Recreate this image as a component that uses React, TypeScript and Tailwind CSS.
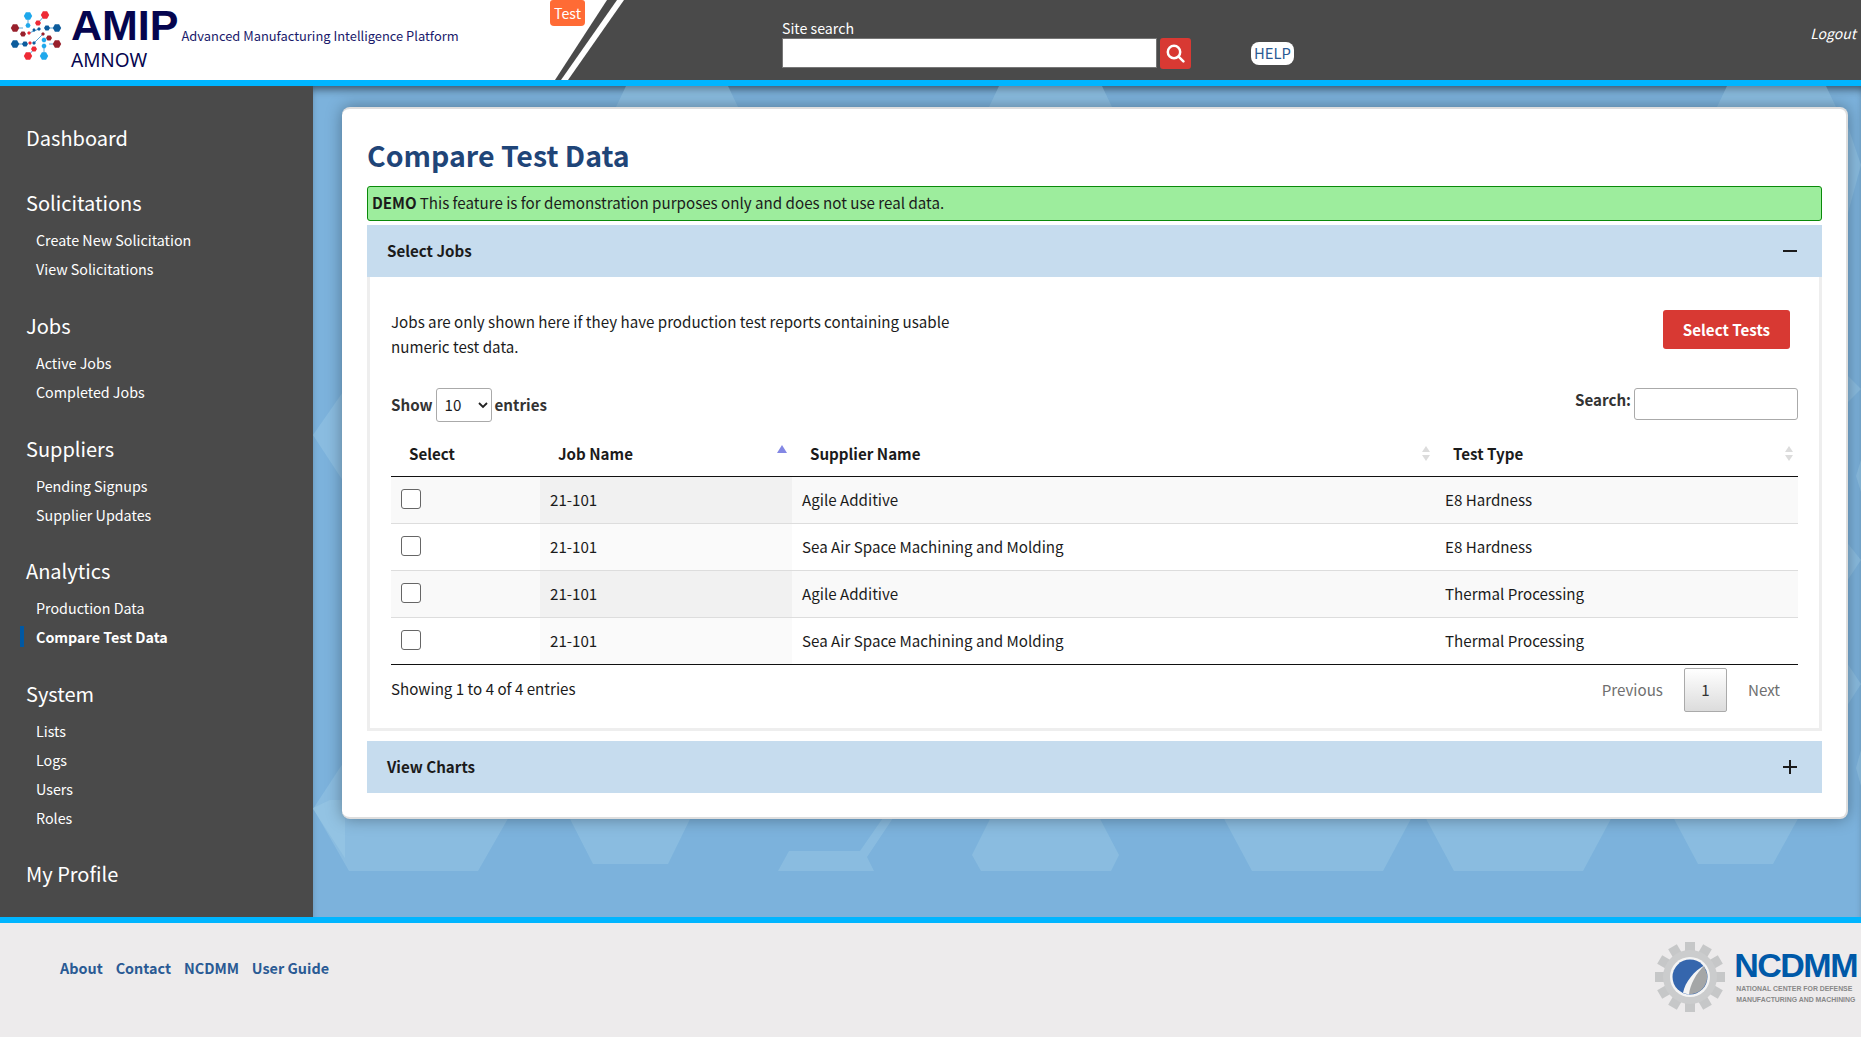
import React from "react";

const SANS = "font-['Noto_Sans_CJK_SC','Source_Sans_Pro',sans-serif]";

function Logo() {
  const hexes: [number, number, number, string][] = [
    [27, 15, 4.2, "#1ea8ec"], [44, 14, 4.2, "#ee2a35"], [14, 27, 4.2, "#98202c"], [56, 27, 4.2, "#0d5c9c"],
    [14, 43, 4.2, "#0d5c9c"], [56, 43, 4.2, "#98202c"], [27, 55, 4.2, "#ee2a35"], [43, 55, 4.2, "#1ea8ec"],
    [27, 24.5, 2.6, "#1ea8ec"], [37, 22, 3, "#ee2a35"], [46, 27, 3, "#0d5c9c"], [22, 33, 3, "#98202c"],
    [48, 37, 3, "#98202c"], [24, 43, 3, "#0d5c9c"], [33, 48, 3, "#ee2a35"], [43, 39, 2.5, "#1ea8ec"],
    [43, 45, 2.5, "#1ea8ec"], [28, 32, 1.8, "#ee2a35"], [38, 28, 1.8, "#0d5c9c"], [33, 42, 1.8, "#0d5c9c"],
    [29, 42, 1.8, "#ee2a35"], [42, 33, 1.8, "#98202c"], [33, 29, 1.6, "#0d5c9c"],
  ];
  const hex = (x: number, y: number, r: number) =>
    [0, 60, 120, 180, 240, 300]
      .map((a) => `${x + r * Math.cos((a * Math.PI) / 180)},${y + r * Math.sin((a * Math.PI) / 180)}`)
      .join(" ");
  return (
    <svg width="70" height="70" viewBox="0 0 70 70" className="shrink-0">
      <g stroke="#5aa7d8" strokeWidth="1" fill="none">
        <path d="M27 15V24M14 27H22M56 27H46M14 43H24M56 43H48M27 55L33 48M43 55V45M44 14L37 22M38 28L28 32M42 33L33 42" />
      </g>
      {hexes.map(([x, y, r, c], i) => (
        <polygon key={i} points={hex(x, y, r)} fill={c} />
      ))}
    </svg>
  );
}

function Hexes() {
  const polys = [
    "626,86 728,86 738,107 616,107",
    "999,86 1102,86 1112,107 989,107",
    "1727,86 1826,86 1836,107 1717,107",
    "313,435 345,389 345,484",
    "313,809 345,760 345,858",
    "313,808 349,871 478,871 510,815 510,800 330,800",
    "568,815 593,864 668,864 692,815",
    "778,871 789,851 860,851 885,815 895,815 867,857 874,871",
    "992,815 972,855 981,871 1111,871 1119,855 1098,815",
    "1222,815 1252,871 1383,871 1413,815",
    "1424,815 1454,871 1583,871 1613,815",
    "1672,815 1698,864 1773,864 1800,815",
    "1845,118 1861,165 1845,224",
    "1845,373 1861,389 1845,405",
    "1861,460 1856,476 1861,492",
    "1845,540 1861,560 1845,584",
    "1845,660 1861,684 1845,709",
    "1861,750 1856,768 1861,786",
  ];
  return (
    <svg className="absolute inset-0" width="1548" height="831" viewBox="313 86 1548 831">
      {polys.map((p, i) => (
        <polygon key={i} points={p} fill="#a8d4e8" fillOpacity="0.32" />
      ))}
    </svg>
  );
}

function GearLogo() {
  const teeth = Array.from({ length: 12 }, (_, i) => i * 30);
  return (
    <div className="flex items-center gap-[9px]">
      <svg width="70" height="70" viewBox="-35 -35 70 70" className="shrink-0">
        {teeth.map((a) => (
          <rect key={a} x="-5" y="-35" width="10" height="12" fill="#c6c7c8" transform={`rotate(${a})`} />
        ))}
        <circle r="27" fill="#cbcccd" />
        <circle r="20" fill="#f4f4f4" />
        <circle r="17.5" fill="#3566ad" />
        <path d="M17 -3 A17.5 17.5 0 0 1 2 17 L-3 17 C-2 8 4 -4 14 -11 Z" fill="#a4a6a7" />
        <path d="M15 -12 C4 -6 -5 5 -7 16 L-1 17.5 C0 8 6 -4 15 -12 Z" fill="#f4f4f4" />
      </svg>
      <div className="flex flex-col">
        <span className="font-['Liberation_Sans',sans-serif] font-bold text-[34px] leading-[30px] tracking-[-1.5px] text-[#0059a8]">
          NCDMM
        </span>
        <span className="font-['Liberation_Sans',sans-serif] font-bold text-[6.9px] leading-[11px] mt-[3px] ml-[2px] text-[#888] whitespace-nowrap">
          NATIONAL CENTER FOR DEFENSE
          <br />
          MANUFACTURING AND MACHINING
        </span>
      </div>
    </div>
  );
}

function SortIcon({ active }: { active?: boolean }) {
  if (active) {
    return (
      <svg width="10" height="8" viewBox="0 0 10 8" className="absolute right-[5px] top-[12px]">
        <path d="M5 0L10 8H0Z" fill="#8387e4" />
      </svg>
    );
  }
  return (
    <svg width="10" height="15" viewBox="0 0 10 15" className="absolute right-[4px] top-[13px]">
      <path d="M5 0L9 6H1Z" fill="#dcdcdc" />
      <path d="M5 15L9 9H1Z" fill="#dcdcdc" />
    </svg>
  );
}

const nav = [
  { title: "Solicitations", items: ["Create New Solicitation", "View Solicitations"], gap: "mb-[28px]" },
  { title: "Jobs", items: ["Active Jobs", "Completed Jobs"], gap: "mb-[28px]" },
  { title: "Suppliers", items: ["Pending Signups", "Supplier Updates"], gap: "mb-[27px]" },
  { title: "Analytics", items: ["Production Data", "Compare Test Data"], gap: "mb-[28px]" },
  { title: "System", items: ["Lists", "Logs", "Users", "Roles"], gap: "mb-[28px]" },
];

const rows = [
  ["21-101", "Agile Additive", "E8 Hardness"],
  ["21-101", "Sea Air Space Machining and Molding", "E8 Hardness"],
  ["21-101", "Agile Additive", "Thermal Processing"],
  ["21-101", "Sea Air Space Machining and Molding", "Thermal Processing"],
];

function AccordionHeader({ label, open }: { label: string; open: boolean }) {
  return (
    <div className="h-[52px] bg-[#c6dcee] flex items-center justify-between pl-[20px] pr-[24px]">
      <span className="font-bold text-[15.15px] text-[#1b1b1b] -mt-[2px]">{label}</span>
      <svg width="16" height="16" viewBox="0 0 16 16">
        <path d={open ? "M1 8H15" : "M1 8H15M8 1V15"} stroke="#1b1b1b" strokeWidth="2" />
      </svg>
    </div>
  );
}

export default function App() {
  return (
    <div className={`${SANS} w-[1861px] h-[1037px] overflow-hidden flex flex-col text-[15.15px] text-[#1b1b1b] bg-white`}>
      <header className="relative z-10 h-[86px] shrink-0 flex bg-[#4a4a4a] border-b-[6px] border-[#00b5ff]">
        <div className="w-[560px] h-full bg-white flex pl-[1px] pt-[1px]">
          <Logo />
          <div className="flex flex-col">
            <div className="flex items-end h-[46px]">
              <span className="font-['Liberation_Sans',sans-serif] font-bold text-[43px] leading-[44px] text-[#05054f]">AMIP</span>
              <span className="text-[12.9px] leading-[20px] ml-[3px] mb-[1px] text-[#1a1a6b] whitespace-nowrap">
                Advanced Manufacturing Intelligence Platform
              </span>
            </div>
            <span className="font-['Noto_Sans',sans-serif] text-[19px] leading-[26px] text-[#05054f]">AMNOW</span>
          </div>
        </div>
        <svg className="absolute left-[550px] top-0" width="80" height="80" viewBox="550 0 80 80">
          <polygon points="550,0 624,0 568,80 550,80" fill="#ffffff" />
          <polygon points="607,0 617,0 561,80 555,80" fill="#4a4a4a" />
        </svg>
        <div className="absolute left-[550px] top-0 w-[35px] h-[26px] pt-[1px] bg-[#ff6b35] rounded-b-[4px] rounded-t-[3px] flex items-center justify-center text-white text-[14.2px]">
          Test
        </div>
        <div className="ml-[222px] flex flex-col pt-[18px]">
          <label className="text-white text-[14.2px] leading-[20px]">Site search</label>
          <div className="flex gap-[3px]">
            <div className="w-[375px] h-[30px] bg-white border border-[#777]" />
            <div className="w-[31px] h-[31px] bg-[#d83933] rounded-[3px] flex items-center justify-center">
              <svg width="19" height="19" viewBox="0 0 19 19" fill="none" stroke="#fff" strokeWidth="2.5">
                <circle cx="8" cy="8" r="6.2" />
                <path d="M12.6 12.6L17.4 17.4" strokeLinecap="round" />
              </svg>
            </div>
          </div>
        </div>
        <div className="ml-[60px] mt-[42px] w-[43px] h-[23px] bg-white rounded-lg flex items-center justify-center text-[#2a5a94] text-[14.8px]">
          HELP
        </div>
        <span className="ml-auto mr-[5px] mt-[23px] text-white italic text-[14px] leading-[20px]">Logout</span>
      </header>

      <div className="h-[831px] shrink-0 flex">
        <aside className="w-[313px] shrink-0 bg-[#4a4a4a] text-white pt-[37px] pl-[26px]">
          <a className="block h-[30px] leading-[30px] text-[20px] mb-[35px]">Dashboard</a>
          {nav.map((s) => (
            <section key={s.title} className={s.gap}>
              <h2 className="h-[30px] leading-[30px] text-[20px] mb-[7px]">{s.title}</h2>
              <ul>
                {s.items.map((it) => {
                  const active = it === "Compare Test Data";
                  return (
                    <li key={it} className={`relative h-[29px] leading-[29px] pl-[10px] text-[14.3px] ${active ? "font-bold" : ""}`}>
                      {active && <span className="absolute left-[-6px] top-[4px] w-[4px] h-[21px] bg-[#0058a3]" />}
                      {it}
                    </li>
                  );
                })}
              </ul>
            </section>
          ))}
          <a className="block -mt-[1px] h-[30px] leading-[30px] text-[20px]">My Profile</a>
        </aside>

        <main className="relative flex-1 bg-[#7cb2dc] shadow-[inset_0_7px_8px_-4px_rgba(0,0,0,0.55)] pt-[21px] pl-[29px]">
          <Hexes />
          <div className="relative w-[1506px] h-[712px] bg-white rounded-lg border-t-2 border-r-2 border-b-2 border-[#dedede] shadow-[0_0_16px_rgba(0,0,0,0.35)] pt-[26px] pl-[25px] pr-[24px]">
            <h1 className="h-[40px] leading-[40px] text-[28.5px] font-bold text-[#1f4578] mb-[11px]">Compare Test Data</h1>
            <div className="h-[35px] bg-[#9ded9d] border border-[#0a8a0a] rounded-[3px] pl-[4px] pb-[2px] flex items-center mb-[4px]">
              <b className="mr-[3px]">DEMO</b> This feature is for demonstration purposes only and does not use real data.
            </div>
            <AccordionHeader label="Select Jobs" open />
            <div className="h-[454px] border-l-[3px] border-r-[3px] border-b-[3px] border-[#eeeeee] pl-[21px] pr-[21px]">
              <div className="flex justify-between items-start pt-[33px] pr-[8px] h-[111px]">
                <p className="w-[570px] leading-[25px] -mt-[1px]">
                  Jobs are only shown here if they have production test reports containing usable numeric test data.
                </p>
                <button className="w-[127px] h-[39px] pb-[1px] bg-[#d83933] rounded-[3px] text-white font-bold text-[15.15px]">Select Tests</button>
              </div>
              <div className="flex justify-between items-start h-[45px] font-bold text-[#333]">
                <div className="flex items-center h-[34px] gap-[3px]">
                  <span className="-mt-[2px]">Show</span>
                  <div className="relative w-[56px] h-[34px] bg-white border border-[#aaa] rounded-[3px] flex items-center pl-[8px] pb-[1px] font-normal text-[#1b1b1b]">
                    10
                    <svg className="absolute right-[3px] top-[13px]" width="10" height="7" viewBox="0 0 10 7" fill="none" stroke="#222" strokeWidth="1.8">
                      <path d="M1 1L5 5L9 1" />
                    </svg>
                  </div>
                  <span className="-mt-[2px]">entries</span>
                </div>
                <div className="flex items-center h-[24px] gap-[3px]">
                  <span className="-mt-[1px]">Search:</span>
                  <div className="w-[164px] h-[32px] mt-[8px] bg-white border border-[#aaa] rounded-[3px]" />
                </div>
              </div>
              <table className="w-[1407px] table-fixed border-collapse">
                <colgroup>
                  <col className="w-[149px]" />
                  <col className="w-[252px]" />
                  <col className="w-[643px]" />
                  <col className="w-[363px]" />
                </colgroup>
                <thead>
                  <tr className="h-[43px] border-b border-[#111]">
                    <th className="text-left font-bold pl-[18px] pb-[1px]">Select</th>
                    <th className="relative text-left font-bold pl-[18px] pb-[1px]">Job Name<SortIcon active /></th>
                    <th className="relative text-left font-bold pl-[18px] pb-[1px]">Supplier Name<SortIcon /></th>
                    <th className="relative text-left font-bold pl-[18px] pb-[1px]">Test Type<SortIcon /></th>
                  </tr>
                </thead>
                <tbody>
                  {rows.map((r, i) => (
                    <tr key={i} className={`h-[47px] ${i < 3 ? "border-b border-[#dddddd]" : "border-b border-[#111]"} ${i % 2 === 0 ? "bg-[#f9f9f9]" : "bg-white"}`}>
                      <td className="pl-[10px]">
                        <div className="w-[20px] h-[20px] bg-white border border-[#666] rounded-[3px] -mt-[2px]" />
                      </td>
                      <td className={`pl-[10px] ${i % 2 === 0 ? "bg-[#f1f1f1]" : "bg-[#fafafa]"}`}>{r[0]}</td>
                      <td className="pl-[10px]">{r[1]}</td>
                      <td className="pl-[10px]">{r[2]}</td>
                    </tr>
                  ))}
                </tbody>
              </table>
              <div className="flex justify-between pt-[3px]">
                <span className="leading-[44px] -mt-[2px]">Showing 1 to 4 of 4 entries</span>
                <div className="flex items-center h-[44px] text-[#6f6f6f]">
                  <span className="mr-[21px]">Previous</span>
                  <span className="w-[43px] h-[44px] flex items-center justify-center border border-[#aaa] rounded-[2px] bg-gradient-to-b from-white to-[#dcdcdc] text-[#333]">1</span>
                  <span className="ml-[21px] mr-[18px]">Next</span>
                </div>
              </div>
            </div>
            <div className="mt-[10px]">
              <AccordionHeader label="View Charts" open={false} />
            </div>
          </div>
        </main>
      </div>

      <footer className="flex-1 bg-[#edebec] border-t-[6px] border-[#00b5ff] flex justify-between items-start pl-[60px] pr-[4px]">
        <nav className="flex gap-[12.9px] pt-[34px] font-bold text-[14.4px] leading-[22px] text-[#2a5a94]">
          <a>About</a>
          <a>Contact</a>
          <a>NCDMM</a>
          <a>User Guide</a>
        </nav>
        <div className="pt-[19px]">
          <GearLogo />
        </div>
      </footer>
    </div>
  );
}
